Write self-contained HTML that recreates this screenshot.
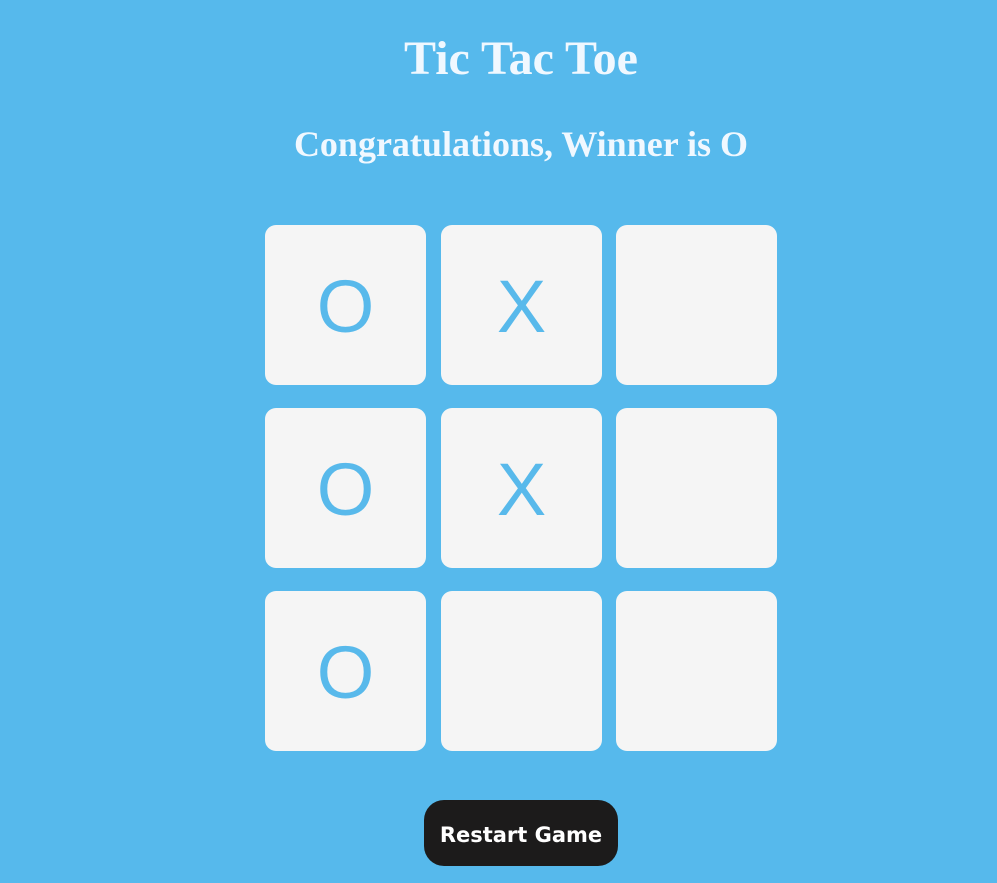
<!DOCTYPE html>
<html><head><meta charset="utf-8"><style>
html,body{margin:0;padding:0;}
body{width:997px;height:883px;background:#56b9ec;position:relative;overflow:hidden;font-family:"Liberation Serif",serif;}
.t{position:absolute;left:0;width:1042px;text-align:center;color:#f0f8ff;font-weight:bold;margin:0;}
h1.t{top:32px;font-size:48px;line-height:54px;}
h2.t{top:123px;font-size:36px;line-height:42px;}
.c{position:absolute;width:161px;height:160px;background:#f5f5f5;border-radius:11px;color:#58b9eb;font-family:"Liberation Sans",sans-serif;font-size:74px;line-height:164px;text-align:center;}
.b{position:absolute;left:424px;top:800px;width:194px;height:66px;background:#1c1b1b;border-radius:20px;color:#fff;font-family:"DejaVu Sans",sans-serif;font-weight:bold;font-size:21px;line-height:70px;text-align:center;}
</style></head><body>
<h1 class="t">Tic Tac Toe</h1>
<h2 class="t">Congratulations, Winner is O</h2>
<div class="c" style="left:265px;top:225px">O</div>
<div class="c" style="left:441px;top:225px">X</div>
<div class="c" style="left:616px;top:225px"></div>
<div class="c" style="left:265px;top:408px">O</div>
<div class="c" style="left:441px;top:408px">X</div>
<div class="c" style="left:616px;top:408px"></div>
<div class="c" style="left:265px;top:591px">O</div>
<div class="c" style="left:441px;top:591px"></div>
<div class="c" style="left:616px;top:591px"></div>
<div class="b">Restart Game</div>
</body></html>
